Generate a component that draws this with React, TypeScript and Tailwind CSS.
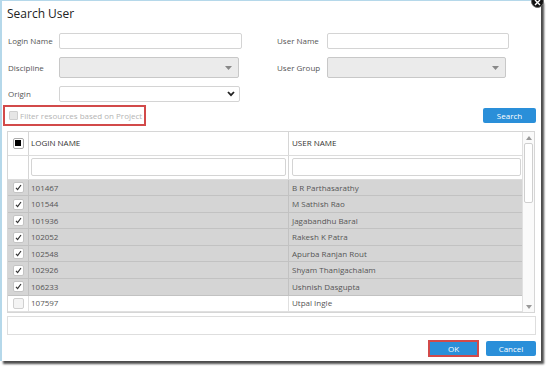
import React from "react";

const rows: [string, string, boolean][] = [
  ["101467", "B R Parthasarathy", true],
  ["101544", "M Sathish Rao", true],
  ["101936", "Jagabandhu Baral", true],
  ["102052", "Rakesh K Patra", true],
  ["102548", "Apurba Ranjan Rout", true],
  ["102926", "Shyam Thanigachalam", true],
  ["106233", "Ushnish Dasgupta", true],
  ["107597", "Utpal Ingle", false],
];

function Tick() {
  return (
    <svg width="9" height="9" viewBox="0 0 9 9">
      <path d="M2 4.8 L3.6 6.6 L7 2" fill="none" stroke="#333" strokeWidth="1.2" />
    </svg>
  );
}

function Caret() {
  return (
    <svg width="7" height="4" viewBox="0 0 7 4">
      <path d="M0 0 L7 0 L3.5 4 Z" fill="#888" />
    </svg>
  );
}

function Chevron() {
  return (
    <svg width="8" height="6" viewBox="0 0 8 6">
      <path d="M1 1 L4 4.2 L7 1" fill="none" stroke="#222" strokeWidth="1.8" />
    </svg>
  );
}

export default function App() {
  return (
    <div className="w-[553px] h-[374px] bg-white relative font-['Open_Sans',sans-serif] text-[8px] text-[#555]">
      <div className="relative w-[541px] h-[361px] bg-white border-l-2 border-t border-[#b5d8ea] shadow-[3px_3px_2px_rgba(0,0,0,0.7)] flex flex-col">
        {/* Title */}
        <div className="pl-[5px] pt-[3px] h-[32px] text-[12px] leading-[20px] text-[#222]">Search User</div>

        {/* Row 1 */}
        <div className="flex items-center h-[16px] pl-[6px]">
          <div className="w-[51px]">Login Name</div>
          <div className="w-[183px] h-[16px] border border-[#d4d4d4] rounded-[2px] bg-white" />
          <div className="w-[35px]" />
          <div className="w-[50px]">User Name</div>
          <div className="w-[182px] h-[16px] border border-[#d4d4d4] rounded-[2px] bg-white" />
        </div>

        {/* Row 2 */}
        <div className="flex items-center h-[21px] pl-[6px] mt-[8px]">
          <div className="w-[51px]">Discipline</div>
          <div className="w-[180px] h-[21px] border border-[#c8c8c8] rounded-[2px] bg-[#ebebeb] flex items-center justify-end pr-[6px]">
            <Caret />
          </div>
          <div className="w-[38px]" />
          <div className="w-[50px]">User Group</div>
          <div className="w-[179px] h-[21px] border border-[#c8c8c8] rounded-[2px] bg-[#ebebeb] flex items-center justify-end pr-[6px]">
            <Caret />
          </div>
        </div>

        {/* Row 3 */}
        <div className="flex items-center h-[16px] pl-[6px] mt-[8px]">
          <div className="w-[51px]">Origin</div>
          <div className="w-[181px] h-[16px] border border-[#d4d4d4] rounded-[2px] bg-white flex items-center justify-end pr-[4px]">
            <Chevron />
          </div>
        </div>

        {/* Filter row */}
        <div className="flex items-center justify-between h-[21px] mt-[3px] pr-[5px]">
          <div className="ml-[1px] w-[143px] h-[21px] border-2 border-[#d24a4a] flex items-center pl-[4px] gap-[2px] text-[#b4b4b4]">
            <div className="w-[9px] h-[9px] border border-[#cfcfcf] bg-[#e6e6e6] rounded-[1px]" />
            <span>Filter resources based on Project</span>
          </div>
          <div className="w-[53px] h-[15px] rounded-[2px] bg-[#2a8fd9] text-white flex items-center justify-center">
            Search
          </div>
        </div>

        {/* Table */}
        <div className="ml-[5px] mt-[5px] w-[528px] h-[182px] border border-[#d6d6d6] flex">
          <div className="flex-1 flex flex-col">
            {/* header */}
            <div className="flex h-[24px] border-b border-[#dcdcdc]">
              <div className="w-[21px] border-r border-[#d6d6d6] flex items-center justify-center">
                <div className="w-[11px] h-[11px] border border-[#aaa] rounded-[2px] bg-white flex items-center justify-center">
                  <div className="w-[6px] h-[6px] bg-black" />
                </div>
              </div>
              <div className="w-[260px] border-r border-[#d6d6d6] flex items-center pl-[2px] text-[#333]">LOGIN NAME</div>
              <div className="flex-1 flex items-center pl-[3px] text-[#333]">USER NAME</div>
            </div>
            {/* filter */}
            <div className="flex h-[24px] border-b border-[#dcdcdc]">
              <div className="w-[21px] border-r border-[#d6d6d6]" />
              <div className="w-[260px] border-r border-[#d6d6d6] flex items-center px-[2px]">
                <div className="w-full h-[18px] border border-[#d4d4d4] rounded-[2px] bg-white" />
              </div>
              <div className="flex-1 flex items-center pl-[3px] pr-[1px]">
                <div className="w-full h-[18px] border border-[#d4d4d4] rounded-[2px] bg-white" />
              </div>
            </div>
            {rows.map(([id, name, sel]) => (
              <div
                key={id}
                className={`flex h-[16.6px] border-b ${sel ? "bg-[#d5d5d5] border-[#c2c2c2]" : "bg-white border-[#e0e0e0]"}`}
              >
                <div className={`w-[21px] border-r flex items-center justify-center ${sel ? "border-[#c2c2c2]" : "border-[#e0e0e0]"}`}>
                  <div
                    className={`w-[11px] h-[11px] border rounded-[2px] flex items-center justify-center ${sel ? "bg-white border-[#c4c4c4]" : "bg-[#f4f4f4] border-[#d0d0d0]"}`}
                  >
                    {sel ? <Tick /> : null}
                  </div>
                </div>
                <div className={`w-[260px] border-r flex items-center pl-[2px] text-[#555] ${sel ? "border-[#c2c2c2]" : "border-[#e0e0e0]"}`}>{id}</div>
                <div className="flex-1 flex items-center pl-[3px] text-[#555]">{name}</div>
              </div>
            ))}
          </div>
          {/* scrollbar */}
          <div className="w-[12px] border-l border-[#e0e0e0] bg-[#fafafa] flex flex-col items-center">
            <div className="h-[9px] flex items-center justify-center mt-[1px]">
              <svg width="6" height="4" viewBox="0 0 6 4"><path d="M0 4 L6 4 L3 0 Z" fill="#999" /></svg>
            </div>
            <div className="mt-[1px] w-[9px] h-[60px] border border-[#cfcfcf] rounded-[2px] bg-white" />
            <div className="flex-1" />
            <div className="h-[9px] flex items-center justify-center mb-[1px]">
              <svg width="6" height="4" viewBox="0 0 6 4"><path d="M0 0 L6 0 L3 4 Z" fill="#999" /></svg>
            </div>
          </div>
        </div>

        {/* footer box */}
        <div className="ml-[5px] mt-[3px] w-[529px] h-[19px] border border-[#dedede] bg-white" />

        {/* buttons */}
        <div className="flex items-center justify-end gap-[7px] mt-[5px] pr-[5px]">
          <div className="w-[51px] h-[17px] border-2 border-[#d24a4a] bg-[#2a8fd9] text-white flex items-center justify-center">
            OK
          </div>
          <div className="w-[50px] h-[15px] rounded-[2px] bg-[#2a8fd9] text-white flex items-center justify-center">
            Cancel
          </div>
        </div>
      </div>
      {/* close button */}
      <div className="absolute left-[531px] top-[-5px] w-[13px] h-[13px] rounded-full bg-[#111] border border-[#666] flex items-center justify-center">
        <svg width="7" height="7" viewBox="0 0 7 7" className="mt-[2px]">
          <path d="M1 1 L6 6 M6 1 L1 6" stroke="#fff" strokeWidth="1.4" />
        </svg>
      </div>
    </div>
  );
}
